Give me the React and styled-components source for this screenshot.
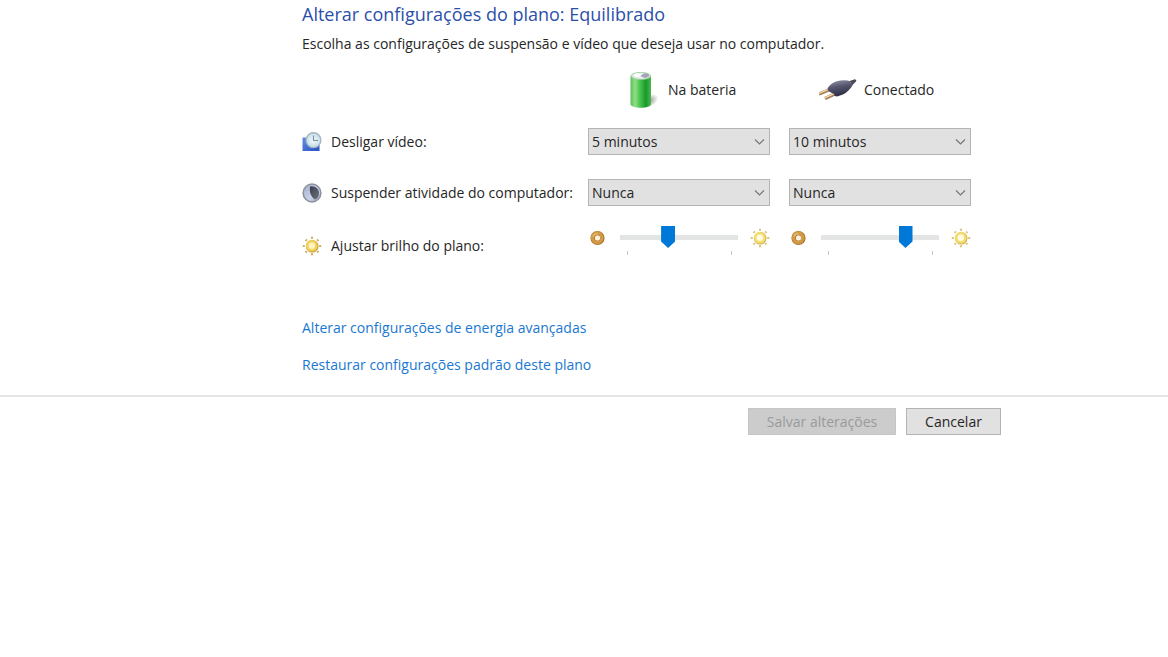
import React, { useState } from 'react';
import styled, { createGlobalStyle } from 'styled-components';

const GlobalStyle = createGlobalStyle`
	* {
		box-sizing: border-box;
	}

	body {
		margin: 0;
		background-color: #ffffff;
		color: #262626;
		font-family: "Segoe UI", "Open Sans", "Noto Sans", sans-serif;
		font-size: 14px;
		line-height: 20px;
	}
`

const Content = styled.main`
	max-width: 1001px;
	padding: 0 0 20px 302px;
`

const PageTitle = styled.h1`
	margin: 0;
	font-size: 18px;
	font-weight: 400;
	line-height: 28px;
	color: #2b50a8;
`

const Description = styled.p`
	margin: 6px 0 10px;
`

const Row = styled.div`
	display: grid;
	grid-template-columns: 267px 182px 182px;
	column-gap: 19px;
	align-items: center;
	min-height: ${props => props.$height || 51}px;
`

const ModeTitle = styled.div`
	display: flex;
	align-items: center;
	gap: 7px;
	padding-left: 30px;
`

const RowLabel = styled.div`
	display: flex;
	align-items: center;
	gap: 9px;
	white-space: nowrap;

	svg {
		flex-shrink: 0;
	}
`

const SelectWrapper = styled.div`
	display: grid;
	align-items: center;

	& > * {
		grid-area: 1 / 1;
	}

	svg {
		justify-self: end;
		margin-right: 5px;
		pointer-events: none;
	}
`

const Select = styled.select`
	appearance: none;
	width: 100%;
	height: 27px;
	padding: 0 20px 0 3px;
	border: 1px solid #b4b4b4;
	border-radius: 0;
	background-color: #e1e1e1;
	color: inherit;
	font: inherit;
`

const SliderGroup = styled.div`
	display: flex;
	justify-content: space-between;
	height: 40px;
`

const SliderIcon = styled.span`
	display: flex;
	align-items: center;
	height: 24px;
`

const SliderBody = styled.div`
	width: 118px;
`

const Slider = styled.input`
	appearance: none;
	display: block;
	width: 100%;
	height: 22px;
	margin: 0;
	background: linear-gradient(#e3e5e5, #e3e5e5) center / 100% 5px no-repeat;

	&::-webkit-slider-thumb {
		appearance: none;
		width: 14px;
		height: 22px;
		background-color: #0078d7;
		clip-path: polygon(0 0, 100% 0, 100% 70%, 50% 100%, 0 70%);
	}
`

const Ticks = styled.div`
	display: flex;
	justify-content: space-between;
	height: 4px;
	margin: 3px 6px 0 7px;
	border: solid #c4c4c4;
	border-width: 0 1px;
`

const Links = styled.nav`
	display: flex;
	flex-direction: column;
	align-items: flex-start;
	gap: 17px;
	margin-top: 44px;
`

const Link = styled.a`
	color: #1a78d0;
	text-decoration: none;

	&:hover {
		text-decoration: underline;
	}
`

const Footer = styled.footer`
	border-top: 2px solid #e5e5e5;
`

const Buttons = styled.div`
	display: flex;
	justify-content: flex-end;
	gap: 10px;
	max-width: 1001px;
	padding-top: 11px;
`

const Button = styled.button`
	width: ${props => props.$wide ? 148 : 95}px;
	height: 27px;
	padding: 0;
	border: 1px solid #b4b4b4;
	background-color: #e1e1e1;
	color: inherit;
	font: inherit;

	&:disabled {
		border-color: #c6c6c6;
		background-color: #cccccc;
		color: #9a9a9a;
	}
`

const BatteryIcon = () => (
	<svg width="43" height="38" viewBox="0 0 43 38" aria-hidden="true">
		<defs>
			<linearGradient id="batteryBody">
				<stop offset="0" stopColor="#5fbb5a"/>
				<stop offset="0.22" stopColor="#8fe086"/>
				<stop offset="0.45" stopColor="#4cc450"/>
				<stop offset="0.75" stopColor="#179a2b"/>
				<stop offset="1" stopColor="#4bb84e"/>
			</linearGradient>
			<radialGradient id="batteryShadow">
				<stop offset="0" stopColor="#777777" stopOpacity="0.8"/>
				<stop offset="1" stopColor="#777777" stopOpacity="0"/>
			</radialGradient>
		</defs>
		<ellipse cx="31" cy="30" rx="10" ry="6" fill="url(#batteryShadow)" transform="rotate(-28 31 30)"/>
		<path d="M12.500 5v28c0 5 20.500 5 20.500 0V5z" fill="url(#batteryBody)"/>
		<ellipse cx="22.800" cy="5" rx="9.900" ry="3.600" fill="#d3e6d6" stroke="#93cf92" strokeWidth="0.8"/>
		<ellipse cx="22.500" cy="4.600" rx="7.500" ry="2.600" fill="#eceef2"/>
		<path d="M22 5l5-3c3 0.500 4.500 1.500 4 3.500L27 7z" fill="#a3a3bb"/>
		<ellipse cx="19.500" cy="4" rx="3.500" ry="1.500" fill="#ffffff"/>
	</svg>
)

const PlugIcon = () => (
	<svg width="38" height="24" viewBox="0 0 38 24" aria-hidden="true">
		<defs>
			<linearGradient id="plugBody" x1="0.35" y1="0" x2="0.65" y2="1">
				<stop offset="0" stopColor="#8f8fa4"/>
				<stop offset="0.4" stopColor="#55556f"/>
				<stop offset="1" stopColor="#25253c"/>
			</linearGradient>
		</defs>
		<path d="M0 16l12-5M6 20.500l12-5.500" stroke="#a27a55" strokeWidth="3.200"/>
		<path d="M0 15.300l12-5M6 19.800l12-5.500" stroke="#f0d2a6" strokeWidth="1.600"/>
		<path d="M9 9.500c2-3 5-5 8-6 5-1.500 10-1.500 14-0.500l5-1.500 1 2-3 3c-2 4-6 8-10 10l-6 2c-2 0-3-1-3-2.500l-4-2c-2-1-3-3-2-4.500z" fill="url(#plugBody)"/>
		<path d="M31 3l5-1.800 1.500 1.500-4 3.500z" fill="#4b4b50"/>
	</svg>
)

const DisplayIcon = () => (
	<svg width="20" height="20" viewBox="0 0 20 20" aria-hidden="true">
		<defs>
			<linearGradient id="displayScreen" x2="1" y2="1">
				<stop offset="0" stopColor="#5f8ee2"/>
				<stop offset="1" stopColor="#2750c4"/>
			</linearGradient>
			<radialGradient id="displayClock">
				<stop offset="0" stopColor="#f4fafc"/>
				<stop offset="1" stopColor="#c3dce8"/>
			</radialGradient>
		</defs>
		<path d="M0.500 5.500h4l13 7v6.500h-17z" fill="url(#displayScreen)"/>
		<circle cx="11.500" cy="8.200" r="7.400" fill="url(#displayClock)" stroke="#a9b4bd" strokeWidth="1.400"/>
		<path d="M11.500 3.500v5h4.500" fill="none" stroke="#7a909e" strokeWidth="1.100"/>
	</svg>
)

const MoonIcon = () => (
	<svg width="20" height="20" viewBox="0 0 20 20" aria-hidden="true">
		<defs>
			<linearGradient id="moonDark" x2="1" y2="1">
				<stop offset="0" stopColor="#3a3f4b"/>
				<stop offset="1" stopColor="#6d727d"/>
			</linearGradient>
			<linearGradient id="moonLight" x2="1" y2="1">
				<stop offset="0" stopColor="#a3acc6"/>
				<stop offset="0.6" stopColor="#c9d2ec"/>
				<stop offset="1" stopColor="#9aa0b0"/>
			</linearGradient>
		</defs>
		<circle cx="10" cy="10" r="8.900" fill="url(#moonLight)" stroke="#8e929c" strokeWidth="1.500"/>
		<path d="M8 3.500c5-1 9 2.500 9 6.500 0 3.500-1.500 5.500-4 6.500-3.500-2-6-7-5-13z" fill="url(#moonDark)"/>
	</svg>
)

const SunIcon = ({ pale }) => (
	<svg width="20" height="20" viewBox="0 0 20 20" aria-hidden="true">
		<path
			d="M10 0.800v2M10 17.200v2M0.800 10h2M17.200 10h2M3.600 3.600l1.200 1.200M15.200 15.200l1.200 1.200M3.600 16.400l1.200-1.200M15.200 4.800l1.200-1.200"
			stroke={pale ? '#dcc277' : '#cfae58'}
			strokeWidth="2.200"
		/>
		<circle cx="10.200" cy="10.200" r="4.600" fill="none" stroke={pale ? '#cfae58' : '#bf9a48'} strokeWidth="3.400"/>
		<circle cx="9.800" cy="9.800" r="4.500" fill={pale ? '#fffbe4' : '#fff3c4'} stroke={pale ? '#f5de6c' : '#f3d357'} strokeWidth="2.600"/>
	</svg>
)

const DimIcon = () => (
	<svg width="19" height="16" viewBox="0 0 19 16" aria-hidden="true">
		<circle cx="9.500" cy="8" r="4.800" fill="none" stroke="#a9712b" strokeWidth="4.600"/>
		<circle cx="9.200" cy="7.700" r="4.700" fill="none" stroke="#d39a45" strokeWidth="3.400"/>
		<path d="M5 6.500c1-2 2.500-3 4.500-3" fill="none" stroke="#eac27a" strokeWidth="1.200"/>
		<circle cx="9.500" cy="8" r="2.400" fill="#fff1dc"/>
	</svg>
)

const ChevronIcon = () => (
	<svg width="11" height="8" viewBox="0 0 11 8" aria-hidden="true">
		<path d="M1 1.500l4.500 4.500L10 1.500" fill="none" stroke="#777777" strokeWidth="1.200"/>
	</svg>
)

const TimeSelect = ({ label, initial }) => {
	const [value, setValue] = useState(initial);

	return (
		<SelectWrapper>
			<Select aria-label={label} value={value} onChange={e => setValue(e.target.value)}>
				<option>5 minutos</option>
				<option>10 minutos</option>
				<option>Nunca</option>
			</Select>
			<ChevronIcon/>
		</SelectWrapper>
	);
}

const BrightnessSlider = ({ label, initial }) => {
	const [value, setValue] = useState(initial);

	return (
		<SliderGroup>
			<SliderIcon><DimIcon/></SliderIcon>
			<SliderBody>
				<Slider type="range" aria-label={label} value={value} onChange={e => setValue(e.target.value)}/>
				<Ticks/>
			</SliderBody>
			<SliderIcon><SunIcon pale/></SliderIcon>
		</SliderGroup>
	);
}

const App = () => {
	return (
		<>
			<GlobalStyle/>
			<Content>
				<PageTitle>Alterar configurações do plano: Equilibrado</PageTitle>
				<Description>Escolha as configurações de suspensão e vídeo que deseja usar no computador.</Description>
				<form id="plan">
					<Row $height={52}>
						<span/>
						<ModeTitle><BatteryIcon/>Na bateria</ModeTitle>
						<ModeTitle><PlugIcon/>Conectado</ModeTitle>
					</Row>
					<Row>
						<RowLabel><DisplayIcon/>Desligar vídeo:</RowLabel>
						<TimeSelect label="Desligar vídeo, na bateria" initial="5 minutos"/>
						<TimeSelect label="Desligar vídeo, conectado" initial="10 minutos"/>
					</Row>
					<Row>
						<RowLabel><MoonIcon/>Suspender atividade do computador:</RowLabel>
						<TimeSelect label="Suspender atividade, na bateria" initial="Nunca"/>
						<TimeSelect label="Suspender atividade, conectado" initial="Nunca"/>
					</Row>
					<Row $height={56}>
						<RowLabel><SunIcon/>Ajustar brilho do plano:</RowLabel>
						<BrightnessSlider label="Brilho, na bateria" initial={40}/>
						<BrightnessSlider label="Brilho, conectado" initial={75}/>
					</Row>
				</form>
				<Links>
					<Link href="#avancadas">Alterar configurações de energia avançadas</Link>
					<Link href="#restaurar">Restaurar configurações padrão deste plano</Link>
				</Links>
			</Content>
			<Footer>
				<Buttons>
					<Button type="submit" form="plan" $wide disabled>Salvar alterações</Button>
					<Button type="button">Cancelar</Button>
				</Buttons>
			</Footer>
		</>
	);
};

export default App;
